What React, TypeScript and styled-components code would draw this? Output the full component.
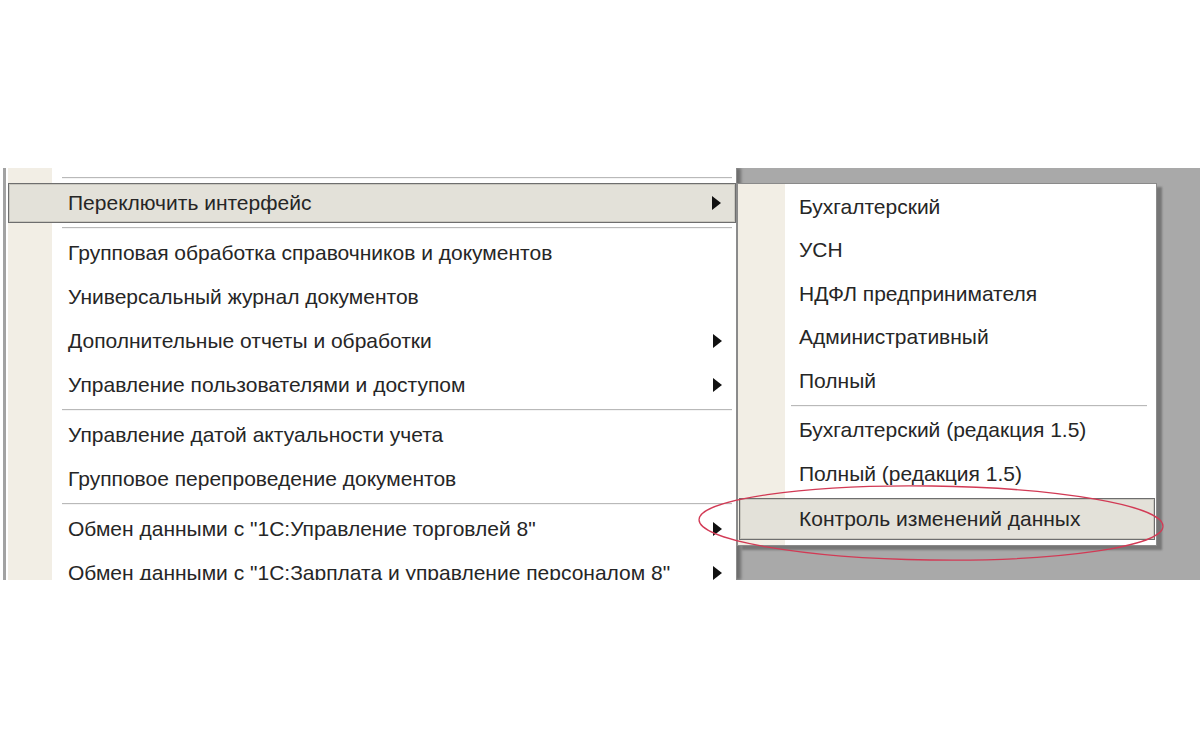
import React from "react";
import styled, { createGlobalStyle } from "styled-components";

const GlobalStyle = createGlobalStyle`
  html, body { margin: 0; padding: 0; background: #ffffff; }
  body { font-family: "Liberation Sans", Arial, sans-serif; }
`;

const Page = styled.div`
  width: 1200px;
  height: 750px;
  display: flex;
  flex-direction: column;
  background: #ffffff;
  overflow: hidden;
`;

const Blank = styled.div<{ $h: number }>`
  height: ${(p) => p.$h}px;
  flex: none;
  background: #ffffff;
`;

const Frame = styled.div`
  position: relative;
  height: 412px;
  flex: none;
  display: flex;
  overflow: hidden;
  background: #ffffff;
`;

const MainMenu = styled.div`
  position: relative;
  z-index: 1;
  margin-left: 3px;
  width: 734px;
  flex: none;
  box-sizing: border-box;
  border-left: 3px solid #a2a2a2;
  border-right: 1px solid #8c8c8c;
  padding-top: 7px;
  background: linear-gradient(to right, #ffffff 0 2px, #f2eee5 2px 46px, #ffffff 46px);
  box-shadow: 4px 0 3px rgba(0, 0, 0, 0.35);
  display: flex;
  flex-direction: column;
`;

const Desktop = styled.div`
  flex: 1;
  background: #a9a9a9;
  padding-top: 15px;
  display: flex;
  align-items: flex-start;
`;

const SubMenu = styled.div`
  position: relative;
  z-index: 2;
  width: 420px;
  box-sizing: border-box;
  border: 1px solid #8a8a8a;
  padding: 1px 1px 3px 1px;
  background: linear-gradient(to right, #f2eee5 0 47px, #ffffff 47px);
  box-shadow: 5px 4px 2px rgba(0, 0, 0, 0.3);
  display: flex;
  flex-direction: column;
`;

const Row = styled.div<{ $h: number; $pad: number; $active?: boolean }>`
  height: ${(p) => p.$h}px;
  flex: none;
  box-sizing: border-box;
  display: flex;
  align-items: center;
  justify-content: space-between;
  padding-left: ${(p) => p.$pad}px;
  padding-right: 14px;
  font-size: 21px;
  letter-spacing: 0;
  color: #262626;
  white-space: nowrap;
  ${(p) =>
    p.$active
      ? `
    margin: 2px 0;
    background: #e3e1d9;
    border: 1px solid #6e6e6e;
    box-shadow: inset 0 0 0 1px #c9c7bf;
  `
      : ""}
`;

const MainActiveRow = styled(Row)`
  margin-left: 2px;
  padding-left: ${(p) => p.$pad - 3}px;
`;

const Separator = styled.div<{ $left: number; $right: number }>`
  height: 6px;
  flex: none;
  display: flex;
  align-items: center;
  padding-left: ${(p) => p.$left}px;
  padding-right: ${(p) => p.$right}px;
  &::after {
    content: "";
    flex: 1;
    height: 1px;
    background: #b9b9b9;
    border-bottom: 1px solid #f4f4f4;
  }
`;

const Arrow = () => (
  <svg width="9" height="14" viewBox="0 0 9 14">
    <polygon points="0,0 9,7 0,14" fill="#111" />
  </svg>
);

const Ellipse = styled.svg`
  position: absolute;
  left: 0;
  top: 0;
  width: 1200px;
  height: 412px;
  pointer-events: none;
  z-index: 3;
`;

const mainTop = [
  { t: "Групповая обработка справочников и документов" },
  { t: "Универсальный журнал документов" },
  { t: "Дополнительные отчеты и обработки", a: true },
  { t: "Управление пользователями и доступом", a: true },
];
const mainMid = [
  { t: "Управление датой актуальности учета" },
  { t: "Групповое перепроведение документов" },
];
const mainBottom = [
  { t: "Обмен данными с \"1С:Управление торговлей 8\"", a: true },
  { t: "Обмен данными с \"1С:Зарплата и управление персоналом 8\"", a: true },
];

const subTop = ["Бухгалтерский", "УСН", "НДФЛ предпринимателя", "Административный", "Полный"];
const subBottom = ["Бухгалтерский (редакция 1.5)", "Полный (редакция 1.5)"];

export default function App() {
  return (
    <Page>
      <GlobalStyle />
      <Blank $h={168} />
      <Frame>
        <MainMenu>
          <Separator $left={56} $right={4} />
          <MainActiveRow $h={40} $pad={62} $active>
            <span>Переключить интерфейс</span>
            <Arrow />
          </MainActiveRow>
          <Separator $left={56} $right={4} />
          {mainTop.map((i) => (
            <Row key={i.t} $h={44} $pad={62}>
              <span>{i.t}</span>
              {i.a && <Arrow />}
            </Row>
          ))}
          <Separator $left={56} $right={4} />
          {mainMid.map((i) => (
            <Row key={i.t} $h={44} $pad={62}>
              <span>{i.t}</span>
            </Row>
          ))}
          <Separator $left={56} $right={4} />
          {mainBottom.map((i) => (
            <Row key={i.t} $h={44} $pad={62}>
              <span>{i.t}</span>
              {i.a && <Arrow />}
            </Row>
          ))}
        </MainMenu>
        <Desktop>
          <SubMenu>
            {subTop.map((t) => (
              <Row key={t} $h={43.5} $pad={60}>
                <span>{t}</span>
              </Row>
            ))}
            <Separator $left={52} $right={8} />
            {subBottom.map((t) => (
              <Row key={t} $h={43.5} $pad={60}>
                <span>{t}</span>
              </Row>
            ))}
            <Row $h={42} $pad={59} $active>
              <span>Контроль изменений данных</span>
            </Row>
          </SubMenu>
        </Desktop>
        <Ellipse viewBox="0 0 1200 412">
          <ellipse
            cx="931"
            cy="355"
            rx="232"
            ry="37"
            fill="none"
            stroke="#d23a55"
            strokeWidth="1.3"
            transform="rotate(0.8 931 355)"
          />
        </Ellipse>
      </Frame>
      <Blank $h={170} />
    </Page>
  );
}
